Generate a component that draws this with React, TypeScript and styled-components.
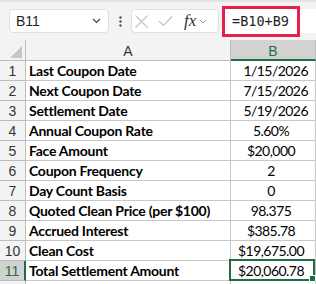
import styled, { createGlobalStyle } from "styled-components";

const GlobalStyle = createGlobalStyle`
  html, body {
    margin: 0;
    padding: 0;
    background: #ffffff;
  }
  body {
    font-family: "Lato", "Liberation Sans", sans-serif;
  }
`;

const Wrapper = styled.div`
  width: 316px;
  height: 284px;
  overflow: hidden;
  background: #ffffff;
`;

const Toolbar = styled.div`
  height: 40px;
  box-sizing: border-box;
  background: #f3f3f3;
  border-top: 2px solid #e3e3e3;
  display: flex;
  align-items: center;
  padding-left: 9px;
`;

const NameBox = styled.div`
  width: 100px;
  height: 24px;
  box-sizing: border-box;
  background: #ffffff;
  border: 1px solid #e0e0e0;
  border-radius: 4px;
  display: flex;
  align-items: center;
  justify-content: space-between;
  padding: 0 7px 0 6px;
  font-family: "Liberation Sans", sans-serif;
  font-size: 14px;
  color: #1f1f1f;
`;

const Dots = styled.div`
  width: 22px;
  display: flex;
  justify-content: center;
  color: #444;
`;

const FxBox = styled.div`
  width: 88px;
  height: 24px;
  box-sizing: border-box;
  background: #ffffff;
  border: 1px solid #e0e0e0;
  border-radius: 4px;
  display: flex;
  align-items: center;
  gap: 9px;
  padding-left: 2px;
`;

const FxLabel = styled.span`
  font-family: "Liberation Serif", serif;
  font-style: italic;
  font-size: 17px;
  color: #333;
  margin-left: 2px;
  display: flex;
  align-items: center;
  gap: 3px;
`;

const FormulaBar = styled.div`
  margin-left: 3px;
  width: 78px;
  height: 31px;
  box-sizing: border-box;
  border: 3px solid #e51f4e;
  background: #ffffff;
  display: flex;
  align-items: center;
  padding-left: 7px;
  font-family: "DejaVu Sans Mono", monospace;
  font-size: 13.5px;
  color: #1f1f1f;
`;

const FormulaTail = styled.div`
  flex: 1;
  height: 24px;
  background: #ffffff;
`;

const Grid = styled.div`
  display: grid;
  grid-template-columns: 26px 205px 85px;
  grid-auto-rows: 20px;
  grid-template-rows: 21px;
`;

const HeadCell = styled.div<{ $active?: boolean }>`
  box-sizing: border-box;
  background: ${(p) => (p.$active ? "#d2d2d2" : "#f3f3f3")};
  border-right: 1px solid #bdbdbd;
  border-bottom: ${(p) => (p.$active ? "2px solid #1e6e42" : "1px solid #bdbdbd")};
  color: ${(p) => (p.$active ? "#1e6e42" : "#333")};
  font-family: "Liberation Sans", sans-serif;
  font-size: 14px;
  display: flex;
  align-items: center;
  justify-content: center;
  padding-top: 2px;
`;

const Corner = styled.div`
  width: 0;
  height: 0;
  border-left: 12px solid transparent;
  border-bottom: 12px solid #c6c6c6;
  margin-left: 6px;
  margin-top: 2px;
`;

const RowNum = styled.div<{ $active?: boolean }>`
  box-sizing: border-box;
  background: ${(p) => (p.$active ? "#d2d2d2" : "#f3f3f3")};
  border-right: ${(p) => (p.$active ? "2px solid #1e6e42" : "1px solid #bdbdbd")};
  border-bottom: 1px solid #bdbdbd;
  color: ${(p) => (p.$active ? "#1e6e42" : "#333")};
  font-family: "Liberation Sans", sans-serif;
  font-size: 14px;
  display: flex;
  align-items: flex-end;
  justify-content: center;
  padding-bottom: 1px;
`;

const Cell = styled.div<{ $align?: string }>`
  box-sizing: border-box;
  border-right: 1px solid #c8c8c8;
  border-bottom: 1px solid #c8c8c8;
  font-size: 14px;
  letter-spacing: -0.55px;
  color: #000;
  display: flex;
  align-items: flex-end;
  padding: 0 7px 1px 3px;
  white-space: nowrap;
  justify-content: ${(p) =>
    p.$align === "right" ? "flex-end" : p.$align === "center" ? "center" : "flex-start"};
  position: relative;
`;

const Label = styled(Cell)`
  font-weight: 700;
  letter-spacing: -0.25px;
`;

const Selection = styled.div`
  position: absolute;
  left: -2px;
  top: -2px;
  right: 0;
  bottom: -1px;
  border: 2px solid #1e6e42;
  pointer-events: none;
`;

const Handle = styled.div`
  position: absolute;
  right: -3px;
  bottom: -3px;
  width: 5px;
  height: 5px;
  background: #1e6e42;
  border: 1px solid #fff;
`;

type Row = { label: string; value: string; align: "right" | "center" };

const rows: Row[] = [
  { label: "Last Coupon Date", value: "1/15/2026", align: "right" },
  { label: "Next Coupon Date", value: "7/15/2026", align: "right" },
  { label: "Settlement Date", value: "5/19/2026", align: "right" },
  { label: "Annual Coupon Rate", value: "5.60%", align: "center" },
  { label: "Face Amount", value: "$20,000", align: "center" },
  { label: "Coupon Frequency", value: "2", align: "center" },
  { label: "Day Count Basis", value: "0", align: "center" },
  { label: "Quoted Clean Price (per $100)", value: "98.375", align: "center" },
  { label: "Accrued Interest", value: "$385.78", align: "center" },
  { label: "Clean Cost", value: "$19,675.00", align: "center" },
  { label: "Total Settlement Amount", value: "$20,060.78", align: "center" },
];

function App() {
  return (
    <Wrapper>
      <GlobalStyle />
      <Toolbar>
        <NameBox>
          <span>B11</span>
          <svg width="9" height="6" viewBox="0 0 9 6">
            <path d="M1 1 L4.5 4.5 L8 1" fill="none" stroke="#444" strokeWidth="1.2" />
          </svg>
        </NameBox>
        <Dots>
          <svg width="3" height="11" viewBox="0 0 3 11">
            <circle cx="1.5" cy="1.5" r="1.2" fill="#555" />
            <circle cx="1.5" cy="5.5" r="1.2" fill="#555" />
            <circle cx="1.5" cy="9.5" r="1.2" fill="#555" />
          </svg>
        </Dots>
        <FxBox>
          <svg width="15" height="15" viewBox="0 0 15 15">
            <path d="M1.5 1.5 L13.5 13.5 M13.5 1.5 L1.5 13.5" stroke="#c4c4c4" strokeWidth="1.2" />
          </svg>
          <svg width="15" height="12" viewBox="0 0 15 12">
            <path d="M1 6 L5.5 10.5 L14 1.5" fill="none" stroke="#c4c4c4" strokeWidth="1.2" />
          </svg>
          <FxLabel>
            fx
            <svg width="8" height="5" viewBox="0 0 8 5">
              <path d="M1 1 L4 4 L7 1" fill="none" stroke="#999" strokeWidth="1" />
            </svg>
          </FxLabel>
        </FxBox>
        <FormulaBar>=B10+B9</FormulaBar>
        <FormulaTail />
      </Toolbar>
      <Grid>
        <HeadCell>
          <Corner />
        </HeadCell>
        <HeadCell>A</HeadCell>
        <HeadCell $active>B</HeadCell>
        {rows.map((r, i) => {
          const last = i === rows.length - 1;
          return [
            <RowNum key={`n${i}`} $active={last}>
              {i + 1}
            </RowNum>,
            <Label key={`l${i}`}>{r.label}</Label>,
            <Cell key={`v${i}`} $align={r.align}>
              {r.value}
              {last && (
                <Selection>
                  <Handle />
                </Selection>
              )}
            </Cell>,
          ];
        })}
        <RowNum />
        <Cell />
        <Cell />
      </Grid>
    </Wrapper>
  );
}

export default App;
